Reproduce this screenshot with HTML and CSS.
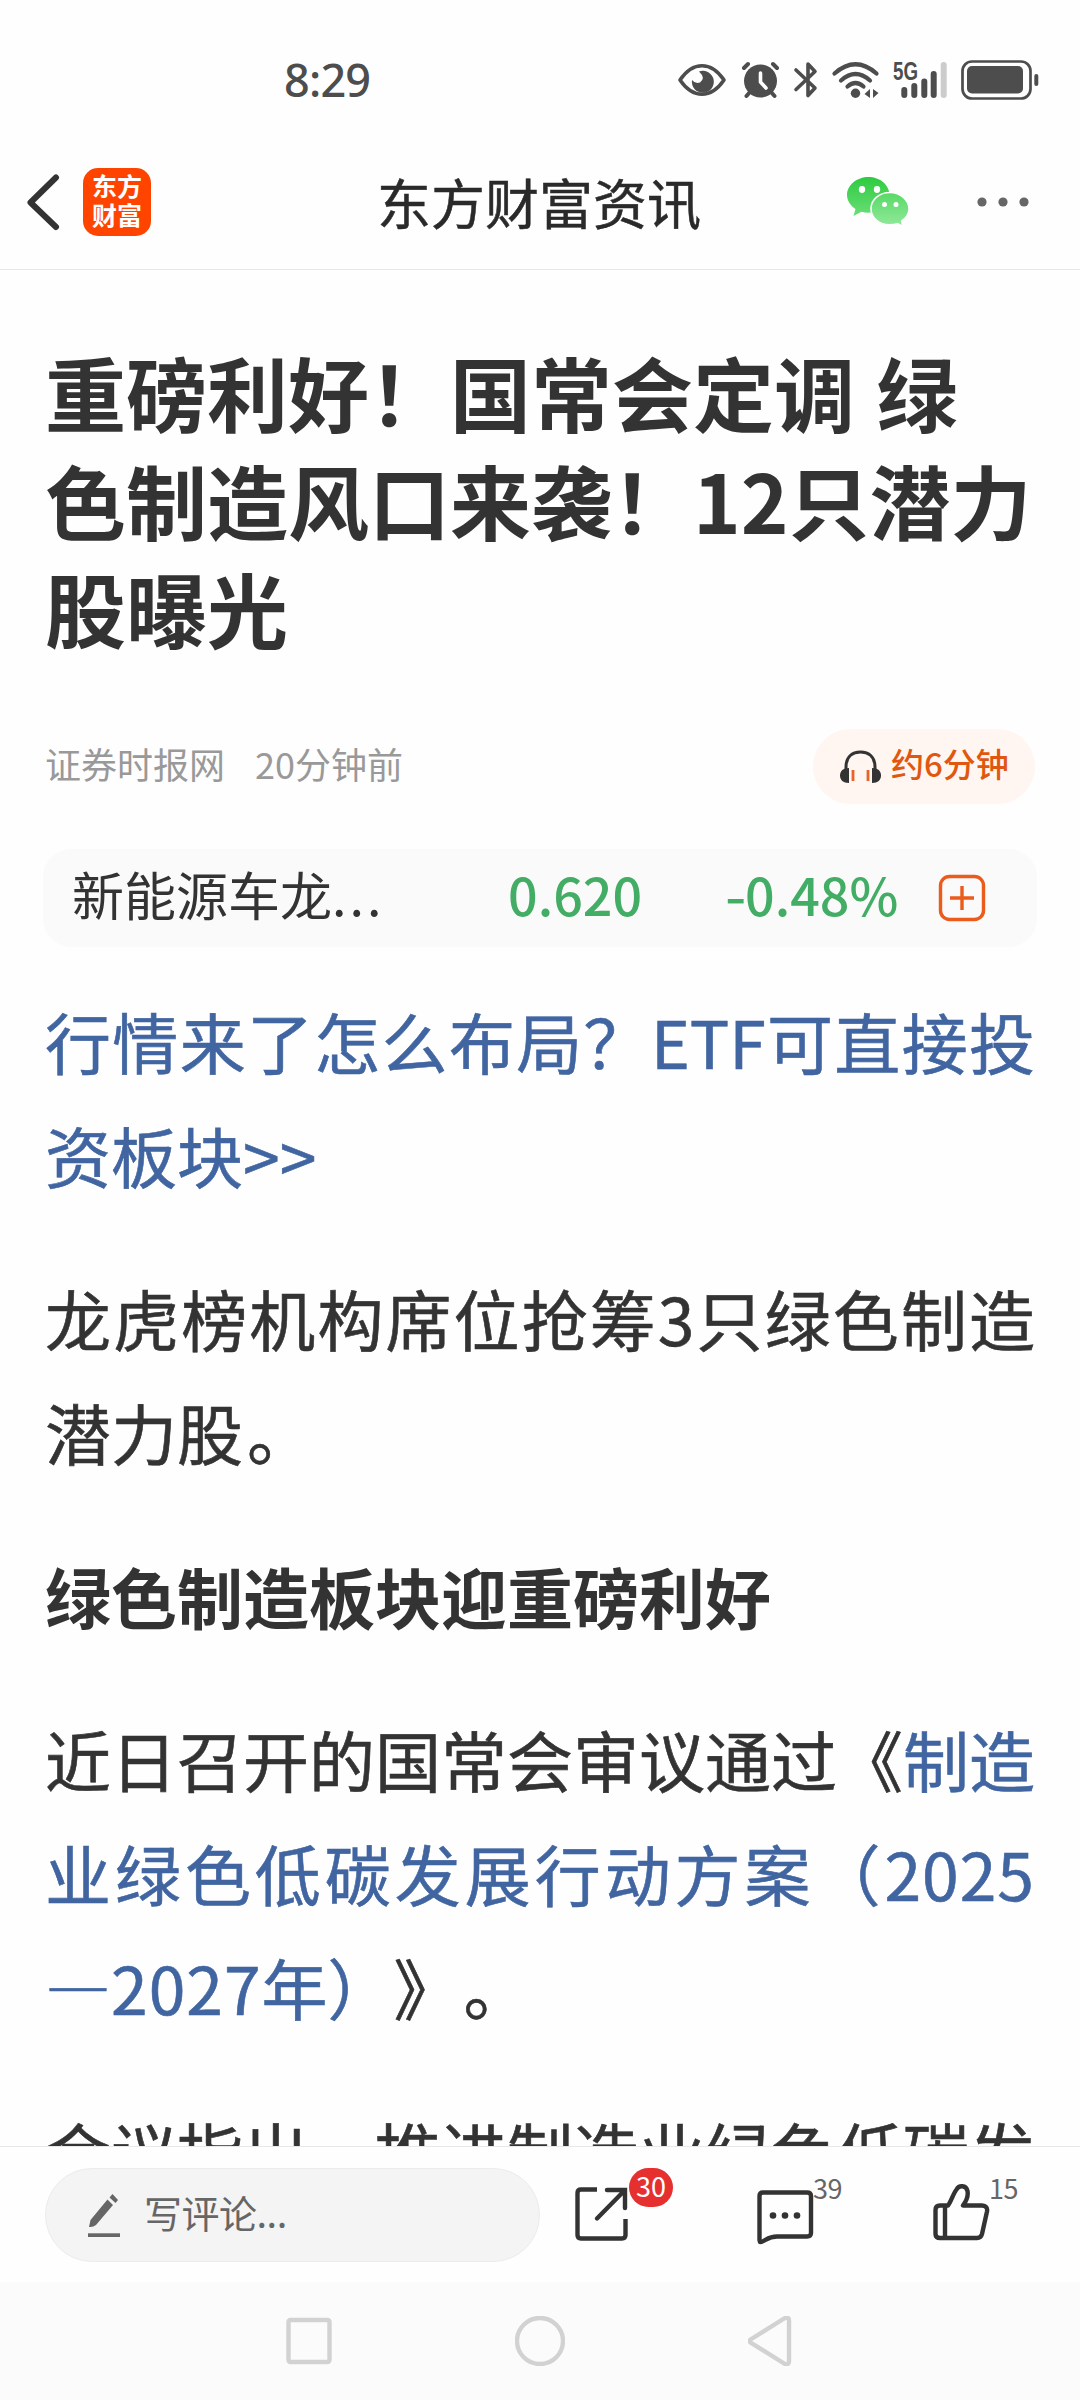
FILE: index.html
```html
<!DOCTYPE html>
<html lang="zh-CN">
<head>
    <title>东方财富资讯</title>
    <meta charset="utf-8">
    <meta name="viewport" content="width=device-width, initial-scale=1">
    <link rel="stylesheet" href="styles.css">
</head>
<body>
    <div class="status-bar">
        <span class="time">8:29</span>
        <svg class="status-icons" width="400" height="80" viewBox="0 0 400 80" fill="none" stroke="#4d4d4d" stroke-linecap="round" stroke-linejoin="round">
            <!-- eye -->
            <path d="M20 40C33 21 51 21 64 40C51 59 33 59 20 40Z" stroke-width="3.6"/>
            <path d="M39 31.5A11 11 0 1 1 32 40Q35 44 40 42.500Q46 38 39 31.500Z" fill="#4d4d4d" stroke="none"/>
            <!-- alarm -->
            <circle cx="100.500" cy="41" r="16.500" fill="#4d4d4d" stroke="none"/>
            <path d="M84 28L88 24M117 28L113 24M90 52L86.500 56M111 52L114.500 56" stroke-width="4"/>
            <path d="M100.500 33V42L106 48" stroke="#fff" stroke-width="3.600"/>
            <!-- bluetooth -->
            <path d="M136 30L155 48L148 55.500V24L155 31.500L136 49.500" stroke-width="3.600"/>
            <!-- wifi -->
            <path d="M174.500 33.500Q195.500 15 216.500 33.500M181 40.500Q195.500 27.500 210 40.500M187.500 46.500Q195.500 39.500 203.500 46.500" stroke-width="4.200"/>
            <circle cx="195.500" cy="53.300" r="4.700" fill="#4d4d4d" stroke="none"/>
            <path d="M210 49V58L204.500 54ZM213 49V58L218.500 53Z" fill="#4d4d4d" stroke="none"/>
            <!-- signal -->
            <path d="M244.300 50V55M254.300 46V55M264.300 41.500V55M273.700 34V55" stroke-width="6"/>
            <path d="M283.700 25V55" stroke="#ccc" stroke-width="6"/>
            <text class="net" x="233" y="39.500" textLength="25" lengthAdjust="spacingAndGlyphs">5G</text>
            <!-- battery -->
            <rect x="302.500" y="21.500" width="68" height="37" rx="9.500" stroke-width="2.700"/>
            <rect x="307" y="26" width="56" height="27.500" rx="5" fill="#4d4d4d" stroke="none"/>
            <path d="M376.300 36V44" stroke-width="4"/>
        </svg>
    </div>

    <div class="header">
        <svg class="back" width="34" height="58" viewBox="0 0 34 58" fill="none" stroke="#333" stroke-width="6" stroke-linecap="round" stroke-linejoin="round">
            <path d="M29 4.500L3.500 29.500L29 54"/>
        </svg>
        <div class="logo">东方<br>财富</div>
        <h1>东方财富资讯</h1>
        <svg class="wechat" width="64" height="52" viewBox="0 0 64 52">
            <defs>
                <linearGradient id="green" x1="0" y1="0" x2="0" y2="1">
                    <stop offset="0" stop-color="#2dcb40"/>
                    <stop offset="1" stop-color="#6ade76"/>
                </linearGradient>
                <linearGradient id="green-light" x1="0" y1="0" x2="0" y2="1">
                    <stop offset="0" stop-color="#58d966"/>
                    <stop offset="1" stop-color="#92e99b"/>
                </linearGradient>
            </defs>
            <path d="M22.500 1C11 1 1 9 1 19C1 25 5 30 9.500 33L7.500 40L15.500 35.800Q20 37 25 36.500L43.500 19C43.500 9 34 1 22.500 1Z" fill="url(#green)"/>
            <path d="M44 16.500C33.500 16.500 25 23.500 25 32.700C25 41.500 33 48.800 43.500 48.800Q48 48.800 51.500 47.700L57 50.500L55.700 45C59.500 42.500 63 38 63 33C63 24 54.500 16.500 44 16.500Z" fill="url(#green-light)" stroke="#fff" stroke-width="1.600"/>
            <g fill="#fff">
                <ellipse cx="16" cy="13.500" rx="3.200" ry="3.400"/>
                <ellipse cx="31" cy="13.500" rx="3.200" ry="3.400"/>
                <circle cx="38.500" cy="28.500" r="2.500"/>
                <circle cx="50" cy="28.500" r="2.500"/>
            </g>
        </svg>
        <svg class="more" width="54" height="12" viewBox="0 0 54 12" fill="#666">
            <circle cx="6" cy="6" r="4.600"/>
            <circle cx="27" cy="6" r="4.600"/>
            <circle cx="48" cy="6" r="4.600"/>
        </svg>
    </div>

    <div class="article">
        <h2>重磅利好！国常会定调 绿<br>色制造风口来袭！12只潜力<br>股曝光</h2>

        <div class="meta">
            <span class="source">证券时报网</span>
            <span class="ago">20分钟前</span>
            <div class="listen">
                <svg width="42" height="34" viewBox="0 0 42 34" fill="none">
                    <path d="M6 22V17C6 7 12 2 20.500 2S35 7 35 17V22" stroke="#333" stroke-width="3"/>
                    <path d="M9 18V33C3 33 0 30 0 25.500S3 18 9 18ZM32 18V33C38 33 41 30 41 25.500S38 18 32 18Z" fill="#333"/>
                    <path d="M13 20V31M28 20V31" stroke="#e8622a" stroke-width="2.800"/>
                </svg>
                <span>约6分钟</span>
            </div>
        </div>

        <div class="stock-card">
            <span class="stock-name">新能源车龙<span class="dots">...</span></span>
            <span class="price">0.620</span>
            <span class="change"><span class="minus">-</span>0.48%</span>
            <svg width="48" height="48" viewBox="0 0 48 48" fill="none" stroke="#ea5b1c" stroke-width="3.400">
                <rect x="2.500" y="2.500" width="43" height="43" rx="9"/>
                <path d="M12 24H36M24 12V36"/>
            </svg>
        </div>

        <div class="content">
            <p>
                <a><span class="line">行情来了怎么布局？ETF可直接投</span>资板块&gt;&gt;</a>
            </p>
            <p><span class="line">龙虎榜机构席位抢筹3只绿色制造</span>潜力股<span class="stop">。</span></p>
            <p><strong>绿色制造板块迎重磅利好</strong></p>
            <p>
                <span class="line">近日召开的国常会审议通过《<a>制造</a></span>
                <a><span class="line">业绿色低碳发展行动方案（<span class="num">2025</span></span>—<span class="num">2027</span>年）</a>》<span class="stop">。</span>
            </p>
            <p><span class="line">会议指出，推进制造业绿色低碳发</span></p>
        </div>
    </div>

    <div class="toolbar">
        <div class="comment-input">
            <svg width="34" height="46" viewBox="0 0 34 46" fill="#666">
                <path d="M1 35L2.500 28L19.500 7.500L25 13L8 33Q5 35.500 1 35ZM21.500 5.500L24.500 2L30 8L27.500 11Z"/>
                <rect x="0" y="41.300" width="32" height="3.700"/>
            </svg>
            <span>写评论...</span>
        </div>
        <div class="action share">
            <svg width="54" height="54" viewBox="0 0 54 54" fill="none" stroke="#333" stroke-width="4.400">
                <path d="M22 2.500H6Q2.500 2.500 2.500 6V48Q2.500 51.500 6 51.500H47Q50.500 51.500 50.500 48V32"/>
                <path d="M32 3H50V21M49 4L22 31.500" stroke-linecap="round"/>
            </svg>
            <span class="badge">30</span>
        </div>
        <div class="action comments">
            <svg width="57" height="55" viewBox="0 0 57 55" fill="none" stroke="#333" stroke-width="4.400" stroke-linejoin="round">
                <path d="M2.500 50V6Q2.500 2.500 6 2.500H50Q54 2.500 54 6V43Q54 46.500 50 46.500H20C10 46.500 8 52 3 52Z"/>
                <g fill="#333" stroke="none"><circle cx="16" cy="25.500" r="3.300"/><circle cx="28" cy="25.500" r="3.300"/><circle cx="40" cy="25.500" r="3.300"/></g>
            </svg>
            <span class="count">39</span>
        </div>
        <div class="action likes">
            <svg width="57" height="57" viewBox="0 0 57 57" fill="none" stroke="#333" stroke-width="4.400" stroke-linejoin="round">
                <path d="M15 21.500C18 18 20 10 23.500 5.500C26 1 33 1 34.500 7C35.500 12 32.500 18 30 21.500H49Q55 22 54 27.500L49 50Q48 54 44 54H7Q2.500 54 2.500 50V26Q2.500 21.500 7 21.500ZM12 22V54"/>
            </svg>
            <span class="count">15</span>
        </div>
    </div>

    <div class="nav-bar">
        <svg width="46" height="50" viewBox="0 0 46 50"><rect x="2.500" y="4" width="41" height="42" rx="2"/></svg>
        <svg width="50" height="50" viewBox="0 0 50 50"><circle cx="25" cy="25" r="23"/></svg>
        <svg width="46" height="50" viewBox="0 0 46 50"><path d="M2.500 23.500L37 2Q41 1 41 4V46Q41 49 37 48L2.500 26.500Q1 25 2.500 23.500Z"/></svg>
    </div>
</body>
</html>
```
FILE: styles.css
```css
* {
    box-sizing: border-box;
}

body {
    display: flex;
    flex-direction: column;
    width: 1080px;
    height: 2400px;
    margin: 0;
    overflow: hidden;
    background: #fefefe;
    color: #333;
    font-family: "Noto Sans CJK SC", sans-serif;
    text-spacing-trim: space-all;
}

svg {
    display: block;
    flex: none;
}

h1, h2, p {
    margin: 0;
}

.status-bar {
    display: flex;
    justify-content: space-between;
    align-items: center;
    height: 160px;
    padding: 0 20px 0 284px;
    flex: none;
    color: #4d4d4d;
}

.time {
    margin-top: -2px;
    font-family: "Noto Sans", sans-serif;
    font-size: 45px;
    font-weight: 500;
    letter-spacing: -0.800px;
}

.net {
    font-family: "Liberation Sans", sans-serif;
    font-size: 25px;
    font-weight: bold;
    fill: #4d4d4d;
    stroke: none;
}

.header {
    display: flex;
    align-items: center;
    height: 110px;
    padding: 0 50px 26px 27px;
    border-bottom: 1px solid #e8e8e8;
    flex: none;
}

.logo {
    display: flex;
    align-items: center;
    justify-content: center;
    width: 68px;
    height: 68px;
    margin-left: 22px;
    padding-bottom: 3px;
    border-radius: 15px;
    background: #ff4400;
    color: white;
    font-size: 25px;
    font-weight: 700;
    line-height: 29px;
}

.header h1 {
    margin-left: 226px;
    font-size: 54px;
    font-weight: 400;
    line-height: 60px;
    color: #2a2a2a;
    -webkit-text-stroke: 0.500px;
}

.wechat {
    margin-left: 145px;
}

.more {
    margin-left: auto;
}

.article {
    flex: 1;
    min-height: 0;
    overflow: hidden;
    padding: 67px 45px 0;
}

.article h2 {
    font-size: 81px;
    font-weight: 700;
    line-height: 108px;
    word-spacing: 3px;
    white-space: nowrap;
}

.meta {
    display: flex;
    align-items: center;
    height: 75px;
    margin-top: 68px;
    font-size: 36px;
    line-height: 50px;
    color: #999;
}

.source, .ago {
    margin-top: -7px;
}

.ago {
    margin-left: 30px;
}

.listen {
    display: flex;
    align-items: center;
    gap: 9px;
    width: 222px;
    height: 75px;
    margin-left: auto;
    padding-left: 27px;
    border-radius: 38px;
    background: #fff5f1;
    color: #e0580f;
    font-size: 33px;
}

.listen span {
    margin-top: -7px;
    font-weight: 500;
}

.stock-card {
    display: flex;
    align-items: center;
    height: 98px;
    margin: 45px -2px 0;
    padding-left: 29px;
    border-radius: 28px;
    background: #fafafa;
    font-size: 52px;
    line-height: 80px;
}

.stock-card > span {
    margin-top: -8px;
}

.stock-name {
    width: 436px;
}

.dots {
    letter-spacing: 3px;
}

.price, .change {
    color: #43ad66;
    font-weight: 500;
}

.price {
    width: 217px;
}

.change {
    width: 213px;
}

.minus {
    display: inline-block;
    width: 20px;
    transform: scaleX(1.150);
    transform-origin: left;
}

.content {
    margin-top: 37px;
    font-size: 66px;
    line-height: 113.800px;
    -webkit-text-stroke: 0.600px;
}

.content p {
    margin-bottom: 49.800px;
    white-space: nowrap;
}

.content strong {
    -webkit-text-stroke: 0;
}

.content a {
    color: #4065a1;
}

/* full lines stretch to both edges */
.line {
    display: block;
    text-align: justify;
    text-align-last: justify;
    white-space: normal;
}

.num {
    letter-spacing: 1px;
}

.stop {
    margin-left: 4px;
}

.toolbar {
    display: flex;
    height: 136px;
    padding: 21px 45px 0;
    border-top: 1px solid #e8e8e8;
    flex: none;
}

.comment-input {
    display: flex;
    align-items: center;
    gap: 22px;
    width: 495px;
    height: 94px;
    padding-left: 42px;
    border: 1px solid #ececec;
    border-radius: 47px;
    background: #f4f4f4;
    color: #666;
    font-size: 38px;
    line-height: 60px;
}

.comment-input span {
    margin-top: -7px;
    letter-spacing: -0.500px;
}

.action {
    position: relative;
    padding-top: 19px;
}

.share {
    margin-left: 35px;
}

.comments {
    margin-left: 128px;
    padding-top: 22px;
}

.likes {
    margin-left: 119px;
    padding-top: 16px;
}

.badge {
    position: absolute;
    top: 0;
    left: 54px;
    width: 44px;
    height: 39px;
    border-radius: 20px;
    background: #e63030;
    color: white;
    font-size: 27px;
    line-height: 36px;
    text-align: center;
}

.count {
    position: absolute;
    top: 0;
    left: 56px;
    color: #666;
    font-size: 27px;
    line-height: 40px;
    letter-spacing: -0.500px;
}

.nav-bar {
    display: flex;
    justify-content: center;
    align-items: center;
    gap: 183px;
    height: 118px;
    flex: none;
    background: #fbfbfb;
}

.nav-bar svg {
    fill: none;
    stroke: #d2d2d2;
    stroke-width: 4.400;
}
```
